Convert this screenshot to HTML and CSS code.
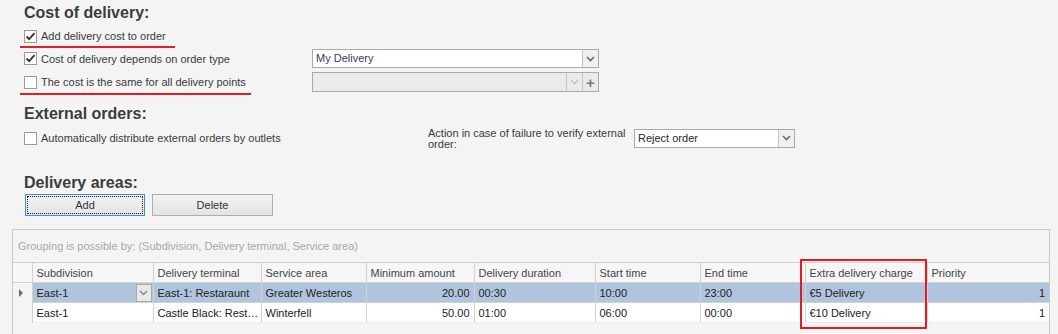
FILE: index.html
```html
<!DOCTYPE html>
<html lang="en">
	<head>
		<meta charset="UTF-8" />
		<title>Delivery settings</title>
		<link rel="stylesheet" href="styles.css">
	</head>
	<body>
		<div class="section">
			<h2 class="title">Cost of delivery:</h2>

			<div class="row row-1">
				<label class="opt marked">
					<span class="box checked"><svg width="11" height="11" viewBox="0 0 11 11"><path d="M1.5 5.5 L4.2 8.2 L9.5 2.2" fill="none" stroke="#333" stroke-width="1.8"/></svg></span>
					Add delivery cost to order
				</label>
			</div>

			<div class="row row-2">
				<label class="opt wide">
					<span class="box checked"><svg width="11" height="11" viewBox="0 0 11 11"><path d="M1.5 5.5 L4.2 8.2 L9.5 2.2" fill="none" stroke="#333" stroke-width="1.8"/></svg></span>
					Cost of delivery depends on order type
				</label>
				<div class="combo combo-type">
					<span class="combo-text">My Delivery</span>
					<span class="combo-btn"><svg width="9" height="6" viewBox="0 0 9 6"><path d="M1 1 L4.5 4.5 L8 1" fill="none" stroke="#6a6a6a" stroke-width="1.6"/></svg></span>
				</div>
			</div>

			<div class="row row-3">
				<label class="opt wide marked-long">
					<span class="box"></span>
					The cost is the same for all delivery points
				</label>
				<div class="combo combo-type disabled">
					<span class="combo-text"></span>
					<span class="combo-btn"><svg width="9" height="6" viewBox="0 0 9 6"><path d="M1 1 L4.5 4.5 L8 1" fill="none" stroke="#c4c4c4" stroke-width="1.6"/></svg></span>
					<span class="combo-btn plus">+</span>
				</div>
			</div>

			<h2 class="title title-ext">External orders:</h2>

			<div class="row row-ext">
				<label class="opt ext">
					<span class="box"></span>
					Automatically distribute external orders by outlets
				</label>
				<div class="action-label">Action in case of failure to verify external order:</div>
				<div class="combo combo-action">
					<span class="combo-text">Reject order</span>
					<span class="combo-btn"><svg width="9" height="6" viewBox="0 0 9 6"><path d="M1 1 L4.5 4.5 L8 1" fill="none" stroke="#6a6a6a" stroke-width="1.6"/></svg></span>
				</div>
			</div>

			<h2 class="title title-areas">Delivery areas:</h2>

			<div class="buttons">
				<button class="btn focused"><span>Add</span></button>
				<button class="btn">Delete</button>
			</div>
		</div>

		<div class="grid">
			<div class="group-panel">Grouping is possible by: (Subdivision, Delivery terminal, Service area)</div>
			<table>
				<colgroup>
					<col style="width: 19px" />
					<col style="width: 121px" />
					<col style="width: 108px" />
					<col style="width: 105px" />
					<col style="width: 108px" />
					<col style="width: 121px" />
					<col style="width: 105px" />
					<col style="width: 105px" />
					<col style="width: 122px" />
					<col style="width: 122px" />
				</colgroup>
				<thead>
					<tr>
						<th class="ind"></th>
						<th>Subdivision</th>
						<th>Delivery terminal</th>
						<th>Service area</th>
						<th>Minimum amount</th>
						<th>Delivery duration</th>
						<th>Start time</th>
						<th>End time</th>
						<th>Extra delivery charge</th>
						<th>Priority</th>
					</tr>
				</thead>
				<tbody>
					<tr class="selected">
						<td class="ind"><span class="arrow"></span></td>
						<td class="edit">East-1<span class="cell-btn"><svg width="9" height="6" viewBox="0 0 9 6"><path d="M1 1 L4.5 4.5 L8 1" fill="none" stroke="#8a8a8a" stroke-width="1.5"/></svg></span></td>
						<td>East-1: Restaraunt</td>
						<td>Greater Westeros</td>
						<td class="num">20.00</td>
						<td>00:30</td>
						<td>10:00</td>
						<td>23:00</td>
						<td>€5 Delivery</td>
						<td class="num">1</td>
					</tr>
					<tr>
						<td class="ind"></td>
						<td>East-1</td>
						<td>Castle Black: Rest…</td>
						<td>Winterfell</td>
						<td class="num">50.00</td>
						<td>01:00</td>
						<td>06:00</td>
						<td>00:00</td>
						<td>€10 Delivery</td>
						<td class="num">1</td>
					</tr>
				</tbody>
			</table>
			<div class="highlight"></div>
		</div>
	</body>
</html>
```

FILE: styles.css
```css
body {
	margin: 0;
	background: #f4f4f4;
	font-family: "Liberation Sans", Arial, sans-serif;
	font-size: 11px;
	color: #3a3a3a;
	width: 1058px;
	height: 334px;
	overflow: hidden;
}

.section {
	padding: 4px 0 0 24px;
}

.title {
	margin: 0;
	font-size: 16px;
	line-height: 18px;
	font-weight: bold;
	color: #3c3c3c;
}

.title-ext {
	margin-top: 12px;
}

.title-areas {
	margin-top: 25px;
}

.row {
	display: flex;
	align-items: center;
}

.row-1 {
	margin-top: 4px;
	height: 20px;
}

.row-2 {
	margin-top: 2px;
	height: 21px;
}

.row-3 {
	margin-top: 2px;
	height: 22px;
}

.row-ext {
	margin-top: 4px;
	height: 22px;
}

.opt {
	display: flex;
	align-items: center;
	gap: 4px;
	position: relative;
	white-space: nowrap;
}

.wide {
	width: 288px;
}

.ext {
	width: 404px;
}

.marked::after,
.marked-long::after {
	content: "";
	position: absolute;
	left: -4px;
	bottom: -5px;
	height: 2px;
	background: #e51d25;
}

.marked::after {
	width: 155px;
}

.marked-long::after {
	width: 231px;
	bottom: -6px;
}

.box {
	display: inline-flex;
	align-items: center;
	justify-content: center;
	width: 11px;
	height: 11px;
	border: 1px solid #9a9a9a;
	background: #fff;
}

.combo {
	display: flex;
	height: 19px;
	border: 1px solid #aaa;
	background: #fff;
	box-sizing: border-box;
}

.combo-type {
	width: 287px;
}

.row-3 .combo {
	height: 20px;
}

.combo.disabled {
	background: #ebebeb;
}

.combo-action {
	width: 161px;
}

.combo-text {
	flex: 1;
	padding-left: 3px;
	line-height: 17px;
	color: #2a2a2a;
}

.combo-type .combo-text {
	color: #3a3a6a;
}

.combo-btn {
	width: 15px;
	border-left: 1px solid #c4c4c4;
	background: #f0f0f0;
	display: flex;
	align-items: center;
	justify-content: center;
}

.disabled .combo-btn {
	background: #ebebeb;
}

.combo-btn.plus {
	font-size: 15px;
	font-weight: bold;
	color: #7a7a7a;
	line-height: 17px;
}

.action-label {
	width: 198px;
	line-height: 11px;
	margin-right: 8px;
	margin-top: 2px;
	white-space: normal;
}

.buttons {
	display: flex;
	gap: 7px;
	margin-top: 2px;
	padding-left: 1px;
}

.btn {
	width: 121px;
	height: 22px;
	border: 1px solid #adadad;
	background: linear-gradient(#f2f2f2, #e4e4e4);
	font-family: inherit;
	font-size: 11px;
	color: #333;
	padding: 0;
}

.btn.focused {
	width: 120px;
	border-color: #3d8ee6;
	padding: 1px;
}

.btn.focused span {
	display: block;
	height: 16px;
	line-height: 16px;
	border: 1px dotted #222;
}

.grid {
	position: relative;
	margin: 13px 0 0 12px;
	width: 1038px;
	height: 105px;
	border: 1px solid #c9c9c9;
	border-bottom: none;
	box-sizing: border-box;
}

.group-panel {
	height: 32px;
	line-height: 33px;
	padding-left: 5px;
	color: #a8a8a8;
	border-bottom: 1px solid #cfcfcf;
}

table {
	border-collapse: collapse;
	table-layout: fixed;
	width: 1036px;
}

th,
td {
	height: 19px;
	padding: 0 4px;
	text-align: left;
	font-weight: normal;
	white-space: nowrap;
	overflow: hidden;
	border-right: 1px solid #d2d2d2;
	border-bottom: 1px solid #d2d2d2;
}

th:last-child,
td:last-child {
	border-right: none;
}

th {
	background: #f6f6f6;
	color: #444;
}

td {
	background: #fff;
	color: #222;
	border-bottom-color: #ececec;
}

.selected td {
	background: #b0c4de;
	border-bottom-color: #d2d2d2;
}

td.ind,
.selected td.ind {
	background: #f4f4f4;
	border-bottom: none;
}

.arrow {
	display: inline-block;
	width: 0;
	height: 0;
	border-top: 4px solid transparent;
	border-bottom: 4px solid transparent;
	border-left: 4px solid #6a6a6a;
	margin-left: 2px;
}

.num {
	text-align: right;
}

.edit {
	position: relative;
}

.cell-btn {
	position: absolute;
	right: 1px;
	top: 1px;
	width: 14px;
	height: 16px;
	border: 1px solid #aaa;
	background: #e8e8e8;
	display: flex;
	align-items: center;
	justify-content: center;
}

.highlight {
	position: absolute;
	left: 787px;
	top: 29px;
	width: 123px;
	height: 66px;
	border: 2px solid #e31b23;
}
```
